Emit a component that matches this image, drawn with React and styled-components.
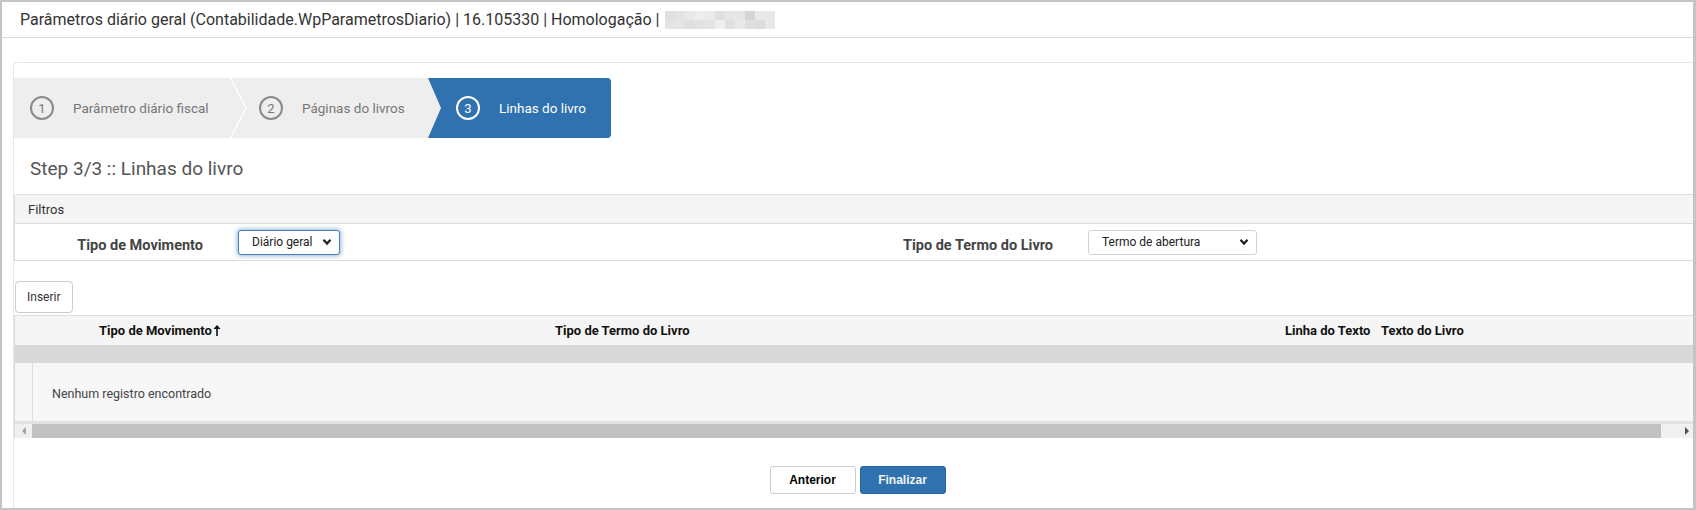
import styled, { createGlobalStyle } from "styled-components";

const GlobalStyle = createGlobalStyle`
  * { box-sizing: border-box; }
  body {
    margin: 0;
    background: #fff;
    font-family: Roboto, "Open Sans", sans-serif;
    color: #333;
  }
`;

const Frame = styled.div`
  width: 1696px;
  height: 510px;
  border: 2px solid #c4c4c4;
  border-right-width: 3px;
  overflow: hidden;
  display: flex;
  flex-direction: column;
`;

const TitleBar = styled.div`
  height: 36px;
  flex-shrink: 0;
  display: flex;
  align-items: center;
  padding-left: 18px;
  border-bottom: 1px solid #d9d9d9;
  font-size: 16px;
  color: #333;
  gap: 6px;
`;

const Blur = styled.div`
  display: grid;
  grid-template-columns: repeat(11, 10px);
  grid-template-rows: 9px 9px;
`;

const BlurCell = styled.span`
  background: ${(p) => p.$c};
`;

const Card = styled.div`
  margin: 24px 0 0 11px;
  border: 1px solid #e6e6e6;
  border-right: none;
  border-bottom: none;
  border-radius: 4px 0 0 0;
  padding-top: 15px;
  flex: 1;
  display: flex;
  flex-direction: column;
`;

const StepsBar = styled.div`
  display: flex;
  align-self: flex-start;
  height: 60px;
  background: #eeeeee;
  border-radius: 0 4px 4px 0;
`;

const Step = styled.div`
  width: ${(p) => p.$width}px;
  padding-left: ${(p) => p.$pad}px;
  display: flex;
  align-items: center;
  gap: 19px;
  font-size: 13.5px;
  color: ${(p) => (p.$active ? "#fff" : "#777")};
  background: ${(p) => (p.$active ? "#3071af" : "transparent")};
  border-radius: ${(p) => (p.$active ? "0 4px 4px 0" : "0")};
  clip-path: ${(p) =>
    p.$active ? "polygon(0 0, 100% 0, 100% 100%, 0 100%, 13px 50%)" : "none"};
`;

const StepNumber = styled.span`
  width: 24px;
  height: 24px;
  flex-shrink: 0;
  border-radius: 50%;
  border: 2px solid ${(p) => (p.$active ? "#fff" : "#8a8a8a")};
  display: flex;
  align-items: center;
  justify-content: center;
  font-size: 13px;
  color: ${(p) => (p.$active ? "#fff" : "#777")};
`;

const Heading = styled.h2`
  margin: 19px 0 0 16px;
  font-size: 19px;
  font-weight: 400;
  line-height: 24px;
  color: #555;
`;

const Panel = styled.div`
  margin-top: 13px;
  border: 1px solid #dcdcdc;
  border-right: none;
  border-radius: 3px 0 0 0;
`;

const PanelHeader = styled.div`
  height: 29px;
  background: #f5f5f5;
  border-bottom: 1px solid #dcdcdc;
  display: flex;
  align-items: center;
  padding-left: 13px;
  font-size: 13px;
  color: #333;
`;

const FilterRow = styled.div`
  height: 36px;
  display: grid;
  grid-template-columns: 223px 626px 224px 1fr;
  align-items: center;
`;

const FieldLabel = styled.label`
  text-align: right;
  padding-right: 35px;
  padding-top: 7px;
  font-size: 14.5px;
  font-weight: 700;
  color: #444;
`;

const SelectBox = styled.div`
  width: ${(p) => p.$width}px;
  height: 25px;
  display: flex;
  align-items: center;
  justify-content: space-between;
  padding: 0 7px 0 13px;
  border: 1px solid ${(p) => (p.$focus ? "#4a7fbd" : "#d2d2d2")};
  border-radius: 3px;
  box-shadow: ${(p) => (p.$focus ? "0 0 4px 1px rgba(70,120,180,0.55)" : "none")};
  font-size: 12px;
  color: #222;
  background: #fff;
`;

const InsertButton = styled.button`
  align-self: flex-start;
  margin: 20px 0 0 1px;
  height: 32px;
  padding: 0 11px;
  border: 1px solid #cccccc;
  border-radius: 4px;
  background: #fff;
  font-family: Roboto, sans-serif;
  font-size: 12px;
  color: #333;
`;

const Table = styled.div`
  margin-top: 2px;
  border-top: 1px solid #dcdcdc;
  border-left: 1px solid #dcdcdc;
`;

const HeadRow = styled.div`
  height: 29px;
  display: grid;
  grid-template-columns: 84px 456px 730px 96px 1fr;
  align-items: center;
  background: #f5f5f5;
  font-size: 13px;
  font-weight: 700;
  color: #111;
`;

const HeadCell = styled.div`
  display: flex;
  align-items: center;
  gap: 1px;
  white-space: nowrap;
`;

const GroupBand = styled.div`
  height: 18px;
  background: #d9d9d9;
`;

const BodyRow = styled.div`
  height: 61px;
  display: flex;
  background: #f7f7f7;
  border-bottom: 3px solid #e2e2e2;
`;

const IndentCell = styled.div`
  width: 18px;
  border-right: 1px solid #dcdcdc;
`;

const EmptyCell = styled.div`
  display: flex;
  align-items: center;
  padding: 3px 0 0 19px;
  font-size: 12.5px;
  color: #444;
`;

const ScrollTrack = styled.div`
  height: 14px;
  display: flex;
  align-items: stretch;
  background: #f0f0f0;
`;

const ScrollButton = styled.div`
  width: ${(p) => p.$width}px;
  display: flex;
  align-items: center;
  justify-content: center;
`;

const ScrollThumb = styled.div`
  width: 1629px;
  background: #c1c1c1;
`;

const ScrollGap = styled.div`
  flex: 1;
`;

const Footer = styled.div`
  margin-top: 28px;
  padding-left: 8px;
  display: flex;
  justify-content: center;
  gap: 4px;
`;

const ActionButton = styled.button`
  width: 86px;
  height: 28px;
  border-radius: 3px;
  border: 1px solid ${(p) => (p.$primary ? "#2a64a0" : "#cccccc")};
  background: ${(p) => (p.$primary ? "#3071af" : "#fff")};
  color: ${(p) => (p.$primary ? "#f4f4f4" : "#000")};
  font-family: "Liberation Sans", Arial, sans-serif;
  font-size: 12px;
  font-weight: 700;
`;

const blurColors = [
  "#e0e0e0", "#e3e3e3", "#e6e9ec", "#eeeeee", "#ebebeb", "#e2e0de",
  "#e4e6e9", "#e6e6e6", "#d5d5d5", "#e8e9ea", "#e6e7e9",
  "#e5e3e0", "#e3e5e6", "#dfe1e0", "#e1e2e2", "#e4e4e6", "#efefef",
  "#e0e0e0", "#e8e8e8", "#dfdfdf", "#dcdcde", "#e8e8ea",
];

const Chevron = () => (
  <svg width="10" height="8" viewBox="0 0 10 8">
    <polyline points="1.5,1.8 5,5.6 8.5,1.8" fill="none" stroke="#222" strokeWidth="2.2" />
  </svg>
);

const StepDivider = () => (
  <svg width="17" height="60" viewBox="0 0 17 60">
    <polyline points="0.5,0 16,30 0.5,60" fill="none" stroke="#fff" strokeWidth="1.4" />
  </svg>
);

const SortUp = () => (
  <svg width="8" height="11" viewBox="0 0 8 11">
    <line x1="4" y1="2" x2="4" y2="11" stroke="#111" strokeWidth="1.6" />
    <polygon points="4,0 7.5,4 0.5,4" fill="#111" />
  </svg>
);

const Arrow = ({ dir }) => (
  <svg width="6" height="8" viewBox="0 0 6 8">
    {dir === "left" ? (
      <polygon points="5,0 5,8 1,4" fill="#a3a3a3" />
    ) : (
      <polygon points="1,0 1,8 5,4" fill="#505050" />
    )}
  </svg>
);

export default function App() {
  return (
    <>
      <GlobalStyle />
      <Frame>
        <TitleBar>
          <span>Parâmetros diário geral (Contabilidade.WpParametrosDiario) | 16.105330 | Homologação |</span>
          <Blur>
            {blurColors.map((c, i) => (
              <BlurCell key={i} $c={c} />
            ))}
          </Blur>
        </TitleBar>

        <Card>
          <StepsBar>
            <Step $width={216} $pad={16}>
              <StepNumber>1</StepNumber>
              Parâmetro diário fiscal
            </Step>
            <StepDivider />
            <Step $width={181} $pad={12}>
              <StepNumber>2</StepNumber>
              Páginas do livros
            </Step>
            <Step $width={183} $pad={28} $active>
              <StepNumber $active>3</StepNumber>
              Linhas do livro
            </Step>
          </StepsBar>

          <Heading>Step 3/3 :: Linhas do livro</Heading>

          <Panel>
            <PanelHeader>Filtros</PanelHeader>
            <FilterRow>
              <FieldLabel>Tipo de Movimento</FieldLabel>
              <SelectBox $width={102} $focus>
                Diário geral
                <Chevron />
              </SelectBox>
              <FieldLabel>Tipo de Termo do Livro</FieldLabel>
              <SelectBox $width={169}>
                Termo de abertura
                <Chevron />
              </SelectBox>
            </FilterRow>
          </Panel>

          <InsertButton>Inserir</InsertButton>

          <Table>
            <HeadRow>
              <span />
              <HeadCell>
                Tipo de Movimento
                <SortUp />
              </HeadCell>
              <HeadCell>Tipo de Termo do Livro</HeadCell>
              <HeadCell>Linha do Texto</HeadCell>
              <HeadCell>Texto do Livro</HeadCell>
            </HeadRow>
            <GroupBand />
            <BodyRow>
              <IndentCell />
              <EmptyCell>Nenhum registro encontrado</EmptyCell>
            </BodyRow>
            <ScrollTrack>
              <ScrollButton $width={17}>
                <Arrow dir="left" />
              </ScrollButton>
              <ScrollThumb />
              <ScrollGap />
              <ScrollButton $width={12}>
                <Arrow dir="right" />
              </ScrollButton>
            </ScrollTrack>
          </Table>

          <Footer>
            <ActionButton>Anterior</ActionButton>
            <ActionButton $primary>Finalizar</ActionButton>
          </Footer>
        </Card>
      </Frame>
    </>
  );
}
